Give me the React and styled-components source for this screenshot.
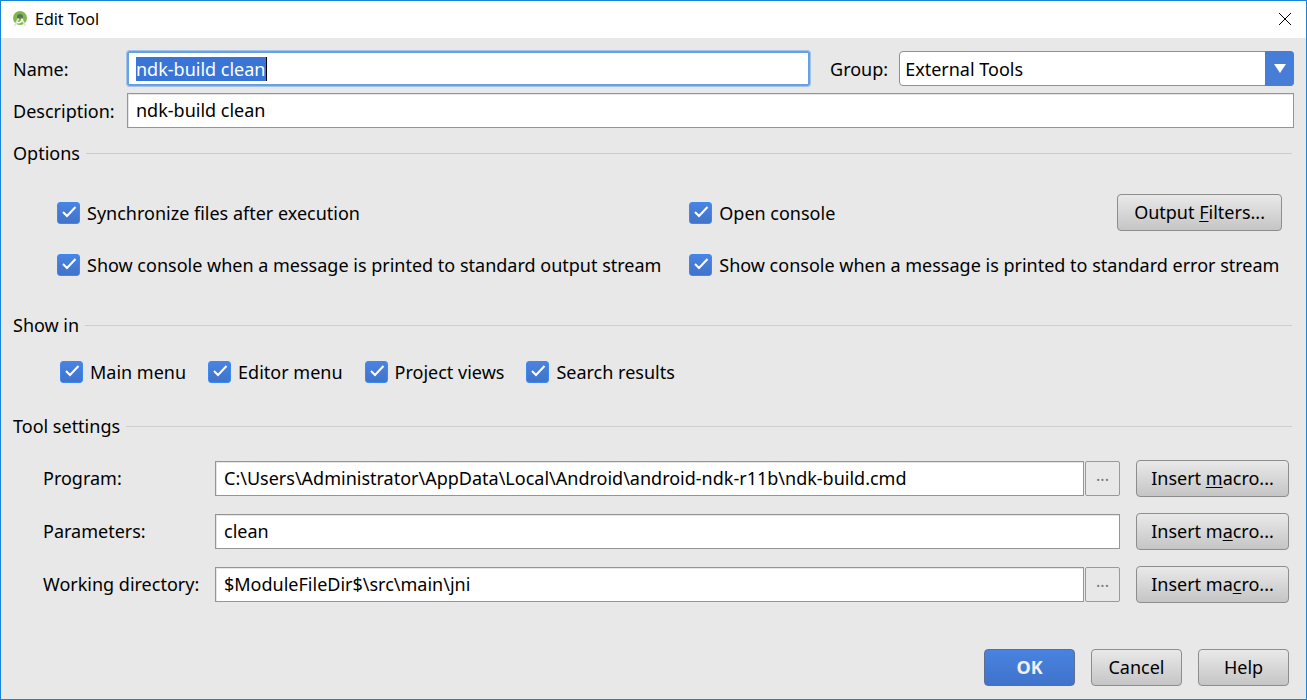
import React, { useEffect, useRef } from 'react';
import styled, { createGlobalStyle, css } from 'styled-components';

function Check({ label }) {
    return (
        <CheckLabel>
            <CheckBox type="checkbox" defaultChecked/>
            <span>{label}</span>
        </CheckLabel>
    );
}

function MacroButton({ before, hotkey, after }) {
    return (
        <Button type="button">{before}<u>{hotkey}</u>{after}</Button>
    );
}

function SettingRow({ id, label, value, browse, macro }) {
    return (
        <>
            <SettingLabel htmlFor={id}>{label}</SettingLabel>
            <SettingField>
                <TextInput id={id} type="text" defaultValue={value}/>
                {browse && <BrowseButton type="button" aria-label={`Browse ${label}`}>...</BrowseButton>}
            </SettingField>
            <MacroButton {...macro}/>
        </>
    );
}

function StudioIcon() {
    return (
        <svg width="16" height="16" viewBox="0 0 16 16" aria-hidden="true">
            <circle cx="8" cy="7" r="7" fill="#7fb94a"/>
            <path d="M5 7.500V6a3 3 0 0 1 6 0v1.500z" fill="#5f6f5c"/>
            <path d="M6.500 7.500L2.500 15M9.500 7.500l4 7.500" stroke="#dfe6da" strokeWidth="1.600" fill="none"/>
            <path d="M5 11.500c2.500.800 5-.500 5.500-3.500" stroke="#fff" strokeWidth="1.600" fill="none"/>
        </svg>
    );
}

function App() {
    const nameRef = useRef(null);

    useEffect(() => {
        nameRef.current.focus();
        nameRef.current.select();
    }, []);

    return (
        <Dialog>
            <GlobalStyle/>
            <TitleBar>
                <StudioIcon/>
                <Title>Edit Tool</Title>
                <CloseButton type="button" aria-label="Close">
                    <svg width="14" height="14" viewBox="0 0 14 14">
                        <path d="M1 1l12 12M13 1L1 13" stroke="#000"/>
                    </svg>
                </CloseButton>
            </TitleBar>
            <Content>
                <TopFields>
                    <label htmlFor="name">Name:</label>
                    <NameRow>
                        <NameField htmlFor="name">
                            <NameInput id="name" type="text" ref={nameRef} defaultValue="ndk-build clean"/>
                        </NameField>
                        <label htmlFor="group">Group:</label>
                        <SelectBox>
                            <Select id="group">
                                <option>External Tools</option>
                            </Select>
                            <SelectArrow>
                                <svg width="12" height="9" viewBox="0 0 12 9">
                                    <path d="M0 0h12L6 9z" fill="#fff"/>
                                </svg>
                            </SelectArrow>
                        </SelectBox>
                    </NameRow>
                    <label htmlFor="description">Description:</label>
                    <TextInput id="description" type="text" defaultValue="ndk-build clean"/>
                </TopFields>

                <GroupTitle>Options</GroupTitle>
                <OptionsGrid>
                    <Check label="Synchronize files after execution"/>
                    <OptionsEnd>
                        <Check label="Open console"/>
                        <MacroButton before="Output " hotkey="F" after="ilters..."/>
                    </OptionsEnd>
                    <Check label="Show console when a message is printed to standard output stream"/>
                    <Check label="Show console when a message is printed to standard error stream"/>
                </OptionsGrid>

                <GroupTitle>Show in</GroupTitle>
                <ShowInRow>
                    <Check label="Main menu"/>
                    <Check label="Editor menu"/>
                    <Check label="Project views"/>
                    <Check label="Search results"/>
                </ShowInRow>

                <GroupTitle>Tool settings</GroupTitle>
                <Settings>
                    <SettingRow
                        id="program"
                        label="Program:"
                        value="C:\Users\Administrator\AppData\Local\Android\android-ndk-r11b\ndk-build.cmd"
                        browse
                        macro={{ before: 'Insert ', hotkey: 'm', after: 'acro...' }}
                    />
                    <SettingRow
                        id="parameters"
                        label="Parameters:"
                        value="clean"
                        macro={{ before: 'Insert m', hotkey: 'a', after: 'cro...' }}
                    />
                    <SettingRow
                        id="directory"
                        label="Working directory:"
                        value="$ModuleFileDir$\src\main\jni"
                        browse
                        macro={{ before: 'Insert ma', hotkey: 'c', after: 'ro...' }}
                    />
                </Settings>
            </Content>
            <Footer>
                <FooterButton type="button" $primary>OK</FooterButton>
                <FooterButton type="button">Cancel</FooterButton>
                <FooterButton type="button">Help</FooterButton>
            </Footer>
        </Dialog>
    );
}

export default App;

const GlobalStyle = createGlobalStyle`
    * {
        box-sizing: border-box;
    }
    body {
        margin: 0;
        color: #000;
        font: 18px/24px "Noto Sans", "Open Sans", sans-serif;
    }
    input, button, select {
        margin: 0;
        color: inherit;
        font: inherit;
    }
    svg {
        display: block;
    }
    ::selection {
        color: #fff;
        background: #3875d7;
    }
`

const Dialog = styled.div`
    display: flex;
    flex-direction: column;
    min-height: 100vh;
    border: 1px solid #1883d7;
    background: #e8e8e8;
    white-space: nowrap;
`

const TitleBar = styled.header`
    display: flex;
    align-items: center;
    height: 37px;
    padding: 0 14px 1px 11px;
    background: #fff;
`

const Title = styled.h1`
    flex: 1;
    margin: 0 0 0 7px;
    font-size: 16px;
    font-weight: 400;
`

const CloseButton = styled.button`
    padding: 0;
    border: 0;
    background: none;
`

const Content = styled.main`
    padding: 13px 12px 0;
`

const TopFields = styled.div`
    display: grid;
    grid-template-columns: 114px 1fr;
    row-gap: 7px;
    align-items: center;
`

const NameRow = styled.div`
    display: grid;
    grid-template-columns: 7fr auto 4fr;
    align-items: center;
`

const NameField = styled.label`
    display: flex;
    align-items: center;
    height: 35px;
    margin-right: 8px;
    padding: 0 7px;
    border: 2px solid #67a0e3;
    border-radius: 2px;
    outline: 1px solid #a3c4ea;
    background: #fff;

    + label {
        padding: 0 11px 0 12px;
    }
`

/* sized to its text, the right border is the caret */
const NameInput = styled.input`
    field-sizing: content;
    height: 24px;
    padding: 0;
    border: 0;
    border-right: 1px solid #000;
    outline: none;
`

const SelectBox = styled.div`
    display: grid;
    height: 35px;
`

const Select = styled.select`
    grid-area: 1 / 1;
    appearance: none;
    padding: 0 34px 0 5px;
    border: 1px solid #919191;
    border-radius: 4px;
    background: #fff;
`

const SelectArrow = styled.span`
    grid-area: 1 / 1;
    justify-self: end;
    display: flex;
    align-items: center;
    justify-content: center;
    width: 29px;
    border-radius: 0 4px 4px 0;
    background: #467dd7;
    pointer-events: none;
`

const TextInput = styled.input`
    flex: 1;
    min-width: 0;
    height: 35px;
    padding: 0 8px 2px;
    border: 1px solid #959595;
    outline: none;
    background: #fff;
    box-shadow: inset 1px 1px #e6e6e6;
`

const GroupTitle = styled.h2`
    display: flex;
    align-items: center;
    margin: 13px 2px 0 0;
    font-size: 18px;
    font-weight: 400;

    &::after {
        content: "";
        flex: 1;
        height: 1px;
        margin-left: 6px;
        background: #cdcdcd;
    }
`

const CheckLabel = styled.label`
    display: flex;
    align-items: center;
    gap: 7px;
`

const CheckBox = styled.input`
    appearance: none;
    flex: none;
    width: 23px;
    height: 22px;
    border: 1px solid #3a8af0;
    border-radius: 3px;
    background: linear-gradient(#4a83e0, #4073cb);

    &:checked {
        background:
            url("data:image/svg+xml,%3Csvg xmlns='http://www.w3.org/2000/svg' viewBox='0 0 21 20'%3E%3Cpath d='M5 9l4 4 8.500-9' fill='none' stroke='white' stroke-width='2'/%3E%3C/svg%3E") center / 100% no-repeat,
            linear-gradient(#4a83e0, #4073cb);
    }
`

const OptionsGrid = styled.div`
    display: grid;
    grid-template-columns: 16fr 15fr;
    grid-template-rows: 37px 37px;
    row-gap: 15px;
    align-items: center;
    padding: 29px 12px 17px 44px;

    > * {
        min-width: 0;
    }
`

const OptionsEnd = styled.div`
    display: flex;
    justify-content: space-between;
`

const ShowInRow = styled.div`
    display: flex;
    gap: 22px;
    padding: 23px 47px 17px;
`

const Settings = styled.div`
    display: grid;
    grid-template-columns: 156px 1fr 153px;
    gap: 16px;
    align-items: center;
    padding: 22px 5px 0 30px;
`

const SettingLabel = styled.label`
    padding-bottom: 2px;
`

const SettingField = styled.div`
    display: flex;
    gap: 1px;
`

const Button = styled.button`
    height: 37px;
    padding: 0 16px 2px;
    border: 1px solid #8d8d8d;
    border-radius: 4px;
    background: linear-gradient(#e9e9e9, #c5c5c5);

    ${Settings} & {
        padding: 0 0 2px;
    }

    u {
        text-underline-offset: 2px;
    }
`

const BrowseButton = styled.button`
    width: 35px;
    height: 35px;
    padding: 0 0 8px;
    border: 1px solid #999;
    border-radius: 2px;
    color: #777;
    background: #e8e8e8;
    font-size: 16px;
`

const Footer = styled.footer`
    display: flex;
    justify-content: flex-end;
    gap: 16px;
    margin-top: auto;
    padding: 0 17px 13px;
`

const FooterButton = styled(Button)`
    width: 91px;
    padding: 0 0 2px;
    ${({ $primary }) => $primary && css`
        color: #f0f0f0;
        font-weight: 700;
        border-color: #5c6f92;
        background: linear-gradient(#4883e0, #4073cb);
    `}
`
